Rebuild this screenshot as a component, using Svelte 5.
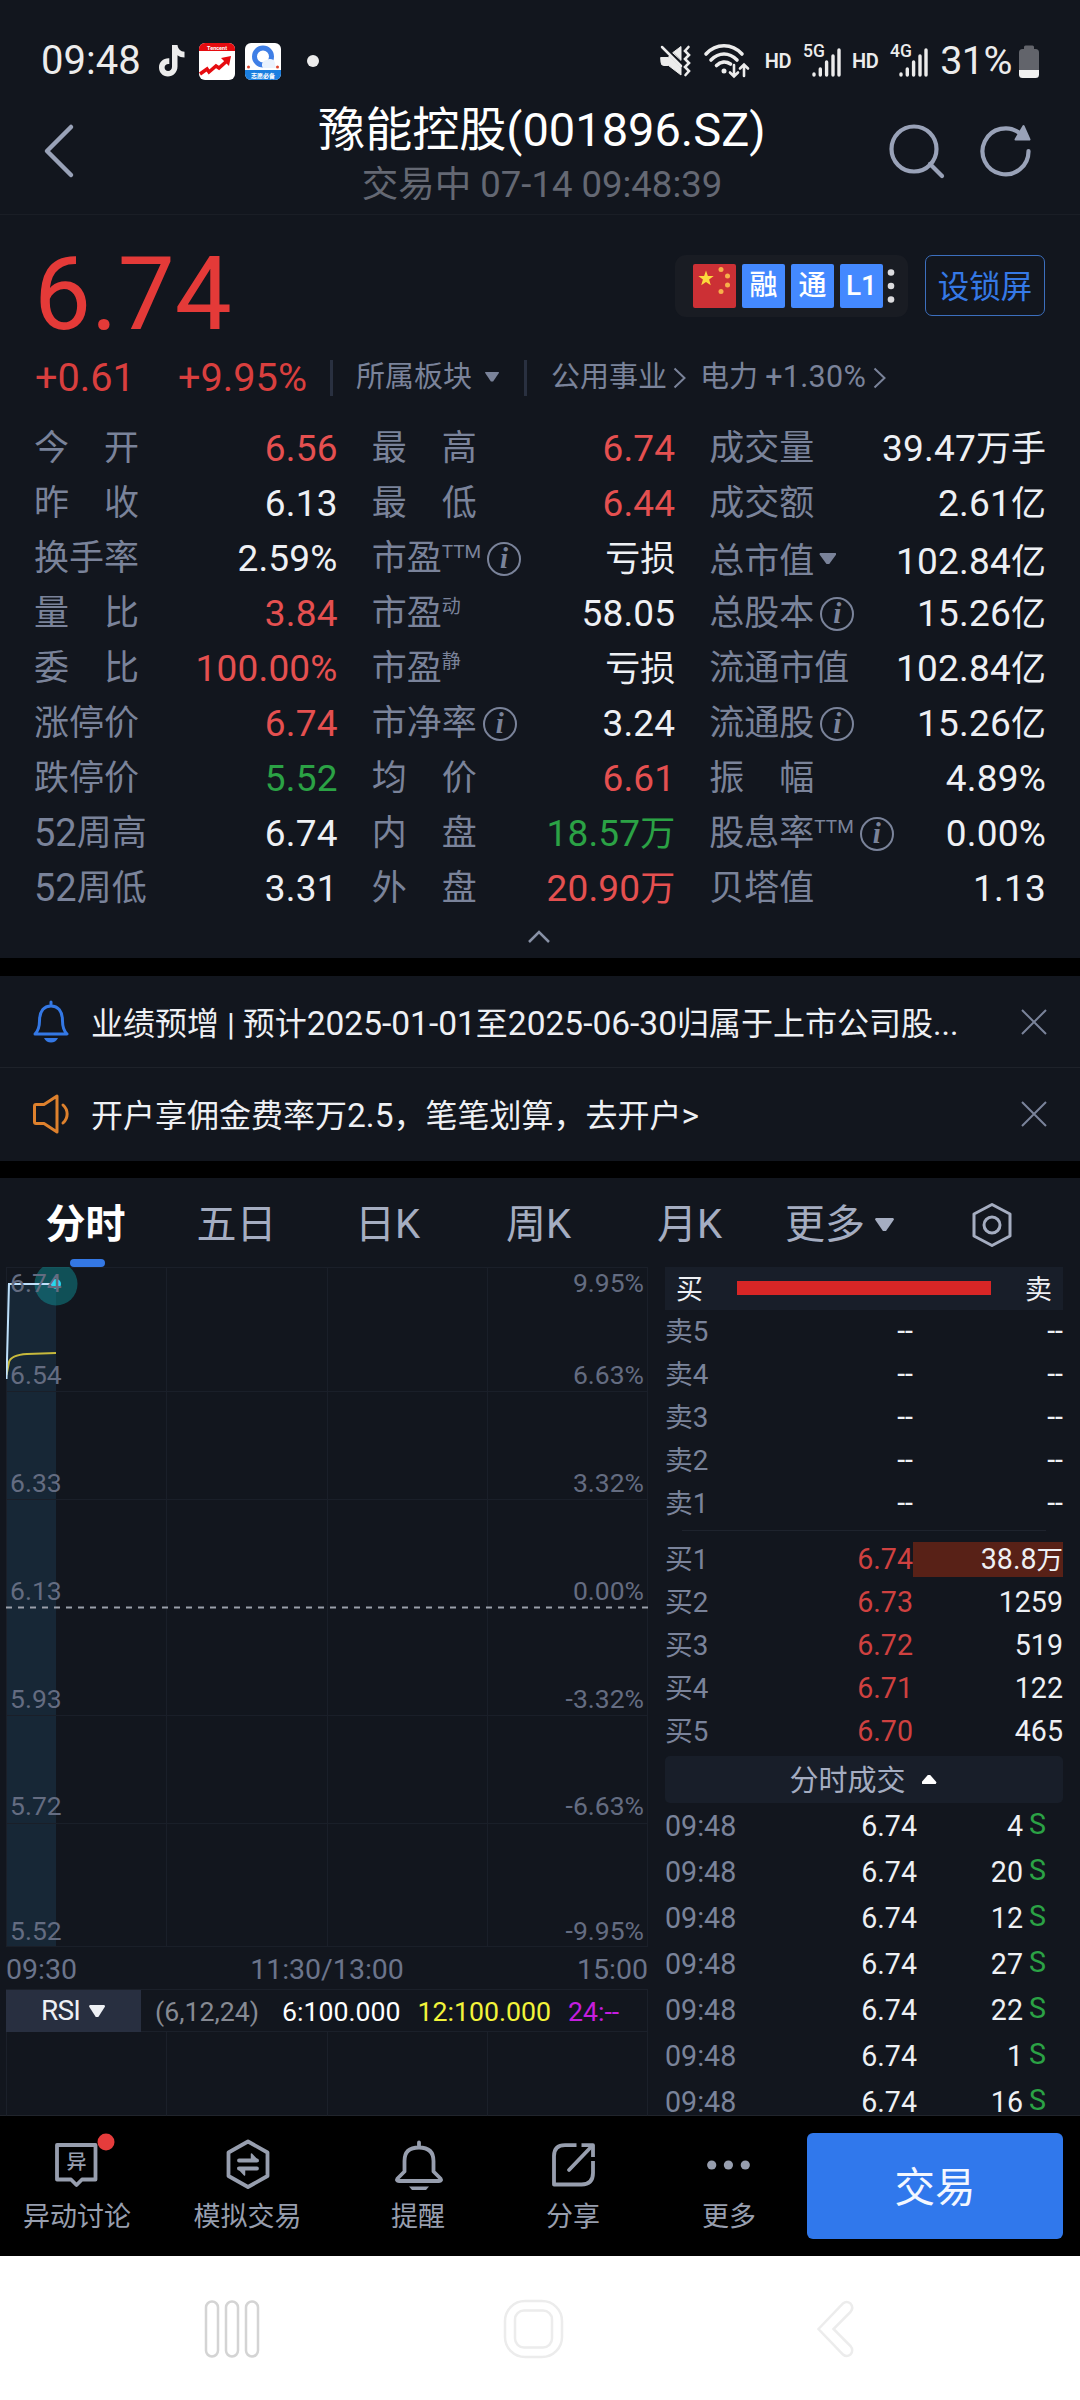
<script lang="ts">
  type Tone = 'up' | 'down' | '';

  interface Stat {
    prefix?: string;
    label: string;
    value: string;
    unit?: string;
    tone?: Tone;
    sup?: string;
    info?: boolean;
    menu?: boolean;
  }

  const statColumns: Stat[][] = [
    [
      { label: '今　开', value: '6.56', tone: 'up' },
      { label: '昨　收', value: '6.13' },
      { label: '换手率', value: '2.59%' },
      { label: '量　比', value: '3.84', tone: 'up' },
      { label: '委　比', value: '100.00%', tone: 'up' },
      { label: '涨停价', value: '6.74', tone: 'up' },
      { label: '跌停价', value: '5.52', tone: 'down' },
      { prefix: '52', label: '周高', value: '6.74' },
      { prefix: '52', label: '周低', value: '3.31' },
    ],
    [
      { label: '最　高', value: '6.74', tone: 'up' },
      { label: '最　低', value: '6.44', tone: 'up' },
      { label: '市盈', sup: 'TTM', info: true, value: '', unit: '亏损' },
      { label: '市盈', sup: '动', value: '58.05' },
      { label: '市盈', sup: '静', value: '', unit: '亏损' },
      { label: '市净率', info: true, value: '3.24' },
      { label: '均　价', value: '6.61', tone: 'up' },
      { label: '内　盘', value: '18.57', unit: '万', tone: 'down' },
      { label: '外　盘', value: '20.90', unit: '万', tone: 'up' },
    ],
    [
      { label: '成交量', value: '39.47', unit: '万手' },
      { label: '成交额', value: '2.61', unit: '亿' },
      { label: '总市值', menu: true, value: '102.84', unit: '亿' },
      { label: '总股本', info: true, value: '15.26', unit: '亿' },
      { label: '流通市值', value: '102.84', unit: '亿' },
      { label: '流通股', info: true, value: '15.26', unit: '亿' },
      { label: '振　幅', value: '4.89%' },
      { label: '股息率', sup: 'TTM', info: true, value: '0.00%' },
      { label: '贝塔值', value: '1.13' },
    ],
  ];

  const tabs = ['分时', '五日', '日K', '周K', '月K'];
  let activeTab = $state('分时');

  // y positions are relative to the top of the price pane
  const priceAxis = [
    { y: 16, price: '6.74', change: '9.95%' },
    { y: 108, price: '6.54', change: '6.63%' },
    { y: 216, price: '6.33', change: '3.32%' },
    { y: 324, price: '6.13', change: '0.00%' },
    { y: 432, price: '5.93', change: '-3.32%' },
    { y: 539, price: '5.72', change: '-6.63%' },
    { y: 664, price: '5.52', change: '-9.95%' },
  ];

  const asks = ['卖5', '卖4', '卖3', '卖2', '卖1'];
  const bids = [
    { label: '买1', price: '6.74', volume: '38.8', unit: '万', depth: 100 },
    { label: '买2', price: '6.73', volume: '1259', unit: '', depth: 0 },
    { label: '买3', price: '6.72', volume: '519', unit: '', depth: 0 },
    { label: '买4', price: '6.71', volume: '122', unit: '', depth: 0 },
    { label: '买5', price: '6.70', volume: '465', unit: '', depth: 0 },
  ];

  const trades = [4, 20, 12, 27, 22, 1, 16];
</script>

{#snippet closeIcon()}
  <svg class="close" width="28" height="28" viewBox="0 0 28 28">
    <path d="M2 2 26 26M26 2 2 26" />
  </svg>
{/snippet}

{#snippet signal(kind: string)}
  <span class="hd">HD</span>
  <svg class="signal" width="40" height="36" viewBox="0 0 40 36">
    <text x="0" y="14">{kind}</text>
    <path d="M11 31v1M17.3 26v6M23.6 19v13M30 13v19M36 7v25" />
  </svg>
{/snippet}

<div class="screen">
  <header>
    <div class="status">
      <span class="clock">09:48</span>
      <svg class="tiktok" width="28" height="34" viewBox="0 0 28 34">
        <path d="M14 1h5.5c.5 4 3 6.400 7 6.800v5.700c-2.700 0-5-.8-7-2.200v11.200c0 6-4.500 10-9.600 10C4.600 32.500 1 28.200 1 23.500c0-5.500 4.400-9.600 10.300-9.200v5.700c-2.500-.5-4.700 1-4.700 3.400 0 2 1.500 3.500 3.500 3.500 2.300 0 3.900-1.500 3.900-4.200z" />
      </svg>
      <svg class="app-icon" width="36" height="37" viewBox="0 0 36 37">
        <rect width="36" height="37" rx="6" fill="#fff" />
        <path d="M0 8V6a6 6 0 0 1 6-6h24a6 6 0 0 1 6 6v2z" fill="#e60c10" />
        <text x="18" y="6.500" text-anchor="middle" fill="#fff" font-size="5.500" font-weight="700">Tencent</text>
        <path d="m1 31 7-5 2 3 7-6 3 2 9-8" fill="none" stroke="#e60c10" stroke-width="3.500" />
        <path d="m22 15 10-2-2 10z" fill="#e60c10" />
      </svg>
      <svg class="app-icon" width="36" height="37" viewBox="0 0 36 37">
        <rect width="36" height="37" rx="6" fill="#fff" />
        <path d="M0 27h36v4a6 6 0 0 1-6 6H6a6 6 0 0 1-6-6z" fill="#1b7fe0" />
        <circle cx="18" cy="13.500" r="8.500" fill="none" stroke="#3f7fe6" stroke-width="5" />
        <path d="M17 23a5 5 0 0 1 5-6 5 5 0 0 1 8 3l1 5H18z" fill="#eaf2fd" />
        <circle cx="3.500" cy="24" r="1.500" fill="#e0452e" />
        <circle cx="32.500" cy="24" r="1.500" fill="#e0452e" />
        <text x="18" y="34.500" text-anchor="middle" fill="#fff" font-size="6" font-weight="700">志愿必备</text>
      </svg>
      <i class="more-dot"></i>
      <span class="spacer"></span>
      <svg class="mute" width="32" height="32" viewBox="0 0 32 32">
        <path d="M1 12.500h7l1.500-1.500L21 22.500V30L8.500 20.500H4a3 3 0 0 1-3-3zM13 7.500l8-6V15z" fill="#ececec" />
        <path d="m2 2 19 19" stroke-width="2.500" />
        <path d="m28.500 2-3.500 4 4 4-4 4 4 4-4 4 4 4-3.500 4" stroke-width="2.600" />
      </svg>
      <svg class="wifi" width="46" height="36" viewBox="0 0 46 36">
        <path d="M2 11C12 0 28 0 38 11M7 17c8-8 18-8 26 0M12.500 22.500c4-4 9.500-4.500 14-1.500" stroke-width="3.600" />
        <circle cx="20" cy="28" r="2.500" fill="#ececec" stroke="none" />
        <path d="M30 22v11M26 29.500l4 4 4-4M40 33V22M36 25.500l4-4 4 4" stroke-width="2.600" />
      </svg>
      {@render signal('5G')}
      {@render signal('4G')}
      <span class="battery-text">31%</span>
      <svg class="battery" width="20" height="33" viewBox="0 0 20 33">
        <path d="M5 4V2q0-1.500 1.500-1.500h7Q15 .5 15 2v2h1.500Q20 4 20 7.500V25H0V7.500Q0 4 3.500 4z" fill="#62646b" />
        <path d="M0 25h20v4.500q0 3.500-3.500 3.500h-13Q0 33 0 29.500z" fill="#f1f1f1" />
      </svg>
    </div>
    <div class="title-bar">
      <svg class="back" width="30" height="54" viewBox="0 0 30 54">
        <path d="M27 3 3 27l24 24" />
      </svg>
      <div class="title">
        <h1>豫能控股(001896.SZ)</h1>
        <p>交易中 07-14 09:48:39</p>
      </div>
      <svg class="tool" width="56" height="56" viewBox="0 0 56 56">
        <circle cx="25" cy="26" r="22.500" />
        <path d="m41 41 12 12" />
      </svg>
      <svg class="tool" width="52" height="56" viewBox="0 0 52 56">
        <path d="M40 10.500A23 23 0 1 0 48.500 28" />
        <path d="m43.500 3 6 13.500H35.500z" class="solid" />
      </svg>
    </div>
  </header>

  <section class="quote">
    <div class="price-row">
      <strong class="price">6.74</strong>
      <div class="badges">
        <svg width="43" height="44" viewBox="0 0 43 44">
          <rect width="43" height="44" rx="2" fill="#cc3035" />
          <path d="m13 6.500 1.900 5.500 5.800.1-4.600 3.500 1.700 5.600-4.800-3.300-4.800 3.300 1.700-5.600-4.600-3.500 5.800-.1z" fill="#fcd93c" />
          <g fill="#f7b04a">
            <circle cx="28" cy="5.500" r="2.500" /><circle cx="34.500" cy="12" r="2.500" />
            <circle cx="34.500" cy="21" r="2.500" /><circle cx="28" cy="27.500" r="2.500" />
          </g>
        </svg>
        <span>融</span><span>通</span><span>L1</span>
        <svg width="8" height="44" viewBox="0 0 8 44" fill="#dcdcdf">
          <circle cx="4" cy="8.500" r="3.300" /><circle cx="4" cy="22" r="3.300" /><circle cx="4" cy="35.500" r="3.300" />
        </svg>
      </div>
      <button class="lock">设锁屏</button>
    </div>
    <div class="change-row">
      <span class="diff">+0.61</span>
      <span class="diff pct">+9.95%</span>
      <div class="sector">所属板块 <i class="tri"></i></div>
      <div class="industry">
        <span>公用事业</span>
        <svg width="13" height="22" viewBox="0 0 13 22"><path d="m1.500 1.500 10 9.500-10 9.500" /></svg>
        <span class="power">电力 <b>+1.30%</b></span>
        <svg width="13" height="22" viewBox="0 0 13 22"><path d="m1.500 1.500 10 9.500-10 9.500" /></svg>
      </div>
    </div>
    <div class="stats">
      {#each statColumns as column}
        <dl>
          {#each column as stat}
            <div class="stat" class:lowered={stat.menu}>
              <dt>
                {#if stat.prefix}<span>{stat.prefix}</span>{/if}{stat.label}{#if stat.sup}<sup>{stat.sup}</sup>{/if}
                {#if stat.info}<i class="info">i</i>{/if}
                {#if stat.menu}<i class="tri menu"></i>{/if}
              </dt>
              <dd class={stat.tone}>{stat.value}{#if stat.unit}<span>{stat.unit}</span>{/if}</dd>
            </div>
          {/each}
        </dl>
      {/each}
    </div>
    <svg class="collapse" width="24" height="15" viewBox="0 0 24 15"><path d="M2 13 12 3l10 10" /></svg>
  </section>

  <section class="notices">
    <div class="notice">
      <svg class="bell" width="38" height="42" viewBox="0 0 38 42">
        <path d="M19 1v4M3 33c3-3 4.500-6 4.500-13C7.500 10 12 5 19 5s11.500 5 11.500 15c0 7 1.500 10 4.500 13z" />
        <path d="M12 37h14c-1.500 3-4 4.500-7 4.500S13.500 40 12 37z" fill="#3478e5" stroke="none" />
      </svg>
      <p>业绩预增 | 预计<b>2025-01-01</b>至<b>2025-06-30</b>归属于上市公司股...</p>
      {@render closeIcon()}
    </div>
    <div class="notice">
      <svg class="speaker" width="38" height="42" viewBox="0 0 38 42">
        <path d="M25 3v36L12 30.500H4q-1.500 0-1.500-1.500V13q0-1.500 1.500-1.500h8zM31 12c5.500 5 5.500 13 0 18" />
      </svg>
      <p>开户享佣金费率万<b>2.5</b>，笔笔划算，去开户<b>&gt;</b></p>
      {@render closeIcon()}
    </div>
  </section>

  <section class="market">
    <nav class="tabs">
      {#each tabs as tab}
        <button class:active={activeTab === tab} onclick={() => (activeTab = tab)}>{tab}</button>
      {/each}
      <button class="more">更多<i class="tri"></i></button>
      <svg width="42" height="46" viewBox="0 0 42 46">
        <path d="m21 2.500 18 9.500v22l-18 9.500L3 34V12z" />
        <circle cx="21" cy="23" r="8" />
      </svg>
    </nav>

    <div class="panes">
      <div class="chart">
        <div class="plot">
          <svg width="642" height="680" viewBox="0 0 642 680">
            <rect x="0" y="17" width="50" height="663" fill="#172736" />
            <path class="grid" d="M0 .5h642M0 124.500h642M0 232.500h642M0 448.500h642M0 556.500h642M0 679.500h642M.5 0v680M160.500 0v680M321.500 0v680M481.500 0v680M641.500 0v680" />
            <path d="M0 340.500h642" stroke="#9a9faa" stroke-width="2" stroke-dasharray="6 6" />
            <circle cx="50" cy="17" r="21.500" fill="#0fa3a8" fill-opacity=".42" />
            <path d="M.5 108 3 95q2-7 18-8l29-1" fill="none" stroke="#c7b93c" stroke-width="2" />
            <path d="M.5 112 3 17h47" fill="none" stroke="#bfe0fb" stroke-width="2" />
            <circle cx="50" cy="17" r="5" fill="#27d6ee" />
          </svg>
          {#each priceAxis as tick}
            <div class="tick" style="top: {tick.y}px">
              <span>{tick.price}</span><span>{tick.change}</span>
            </div>
          {/each}
        </div>
        <div class="times"><span>09:30</span><span>11:30/13:00</span><span>15:00</span></div>
        <div class="indicator">
          <button>RSI<i class="tri"></i></button>
          <span class="params">(6,12,24)</span>
          <span class="r6">6:100.000</span>
          <span class="r12">12:100.000</span>
          <span class="r24">24:--</span>
        </div>
        <div class="subpane"><i></i><i></i><i></i><i></i></div>
      </div>

      <div class="book">
        <div class="ratio"><span>买</span><i></i><span>卖</span></div>
        <div class="asks">
          {#each asks as label}
            <div class="level"><span>{label}</span><b>--</b><b>--</b></div>
          {/each}
        </div>
        <div class="bids">
          {#each bids as bid}
            <div class="level">
              <span>{bid.label}</span>
              <b class="red">{bid.price}</b>
              <b class="volume"><i style="width: {bid.depth}%"></i><em>{bid.volume}{#if bid.unit}<small>{bid.unit}</small>{/if}</em></b>
            </div>
          {/each}
        </div>
        <div class="trades-head">分时成交<i></i></div>
        {#each trades as volume}
          <div class="trade"><span>09:48</span><b>6.74</b><b>{volume}</b><em>S</em></div>
        {/each}
      </div>
    </div>
  </section>

  <footer>
    <div class="action">
      <svg width="60" height="56" viewBox="0 0 60 56">
        <path d="M10 12h38.500v34.500H35l-5.500 5.500-5.500-5.500H10z" />
        <text x="29.500" y="36" text-anchor="middle">异</text>
        <circle cx="59" cy="9" r="8.500" fill="#e53c3c" />
      </svg>
      异动讨论
    </div>
    <div class="action">
      <svg width="60" height="56" viewBox="0 0 60 56">
        <path d="m30 8.500 19.500 11v23.500L30 54 10.500 43V19.500z" />
        <path d="M21 27.500h18M39 35.500H21" />
        <path d="M33.500 21v7h6.500zM26.500 42v-7H20z" class="head" />
      </svg>
      模拟交易
    </div>
    <div class="action">
      <svg width="60" height="56" viewBox="0 0 60 56">
        <path d="M31 9.500v3M16.500 38.500V28Q16.500 14.500 31 14.500T45.500 28v10.500l7 7q1.500 2.500-1.500 2.500H11q-3 0-1.500-2.500z" />
        <path d="M21 53.500h20l-3 3.500H24z" class="dots" />
      </svg>
      提醒
    </div>
    <div class="action">
      <svg width="60" height="56" viewBox="0 0 60 56">
        <path d="M33.500 12.200H22Q11 12.200 11 23v28.500h27.500q11.500 0 11.500-11.500V28M38.500 12.200H50V24" class="butt" />
        <path d="M26 37 49 13" />
      </svg>
      分享
    </div>
    <div class="action">
      <svg width="60" height="56" viewBox="0 0 60 56">
        <g class="dots"><circle cx="12.700" cy="32" r="4.600" /><circle cx="29.400" cy="32" r="4.600" /><circle cx="46.300" cy="32" r="4.600" /></g>
      </svg>
      更多
    </div>
    <button class="trade-button">交易</button>
  </footer>

  <div class="navbar">
    <svg width="56" height="60" viewBox="0 0 56 60" stroke="#d4d4d4">
      <rect x="2" y="2.500" width="12" height="55" rx="6" /><rect x="22" y="2.500" width="12" height="55" rx="6" /><rect x="42" y="2.500" width="12" height="55" rx="6" />
    </svg>
    <svg class="home" width="60" height="60" viewBox="0 0 60 60" stroke="#ececec">
      <rect x="2" y="2" width="57" height="56" rx="20" /><rect x="12" y="11.500" width="37" height="37" rx="9" />
    </svg>
    <svg class="nav-back" width="40" height="60" viewBox="0 0 40 60" stroke="#ececec">
      <path d="M2.500 30 27 4.500q3.500-3 7.500 0 3.500 4 0 8.500L17.500 30l17 17q3.500 4.500 0 8.500-4 3-7.500 0z" />
    </svg>
  </div>
</div>

<style>
  :global(body) {
    background: #fff;
  }

  .screen {
    width: 1080px;
    height: 2400px;
    overflow: hidden;
    background: #12161e;
    color: #eef0f4;
    font-family: Roboto, 'Noto Sans CJK SC', sans-serif;
    display: flex;
    flex-direction: column;
  }

  .screen * {
    box-sizing: border-box;
  }

  svg {
    display: block;
    flex: none;
    overflow: visible;
  }

  i,
  em {
    font-style: normal;
  }

  b {
    font-weight: 400;
  }

  button {
    border: 0;
    padding: 0;
    background: none;
    color: inherit;
    font: inherit;
  }

  h1,
  p,
  dl,
  dd {
    margin: 0;
    font-weight: 400;
  }

  .tri {
    display: inline-block;
    flex: none;
    width: 14px;
    height: 10px;
    background: currentColor;
    clip-path: polygon(4% 0, 96% 0, 100% 12%, 58% 100%, 42% 100%, 0 12%);
  }

  header {
    height: 215px;
    border-bottom: 1px solid #1a1e26;
  }

  .status {
    display: flex;
    align-items: center;
    height: 82px;
    padding: 40px 41px 0 41px;
    color: #ececec;
  }

  .clock {
    width: 117px;
    margin-top: -2px;
    font-size: 40px;
  }

  .tiktok {
    fill: #ececec;
  }

  .app-icon {
    margin-left: 10px;
  }

  .tiktok + .app-icon {
    margin-left: 13px;
  }

  .more-dot {
    width: 12px;
    height: 12px;
    margin-left: 26px;
    border-radius: 50%;
    background: #ececec;
  }

  .spacer {
    flex: 1;
  }

  .mute,
  .wifi {
    fill: none;
    stroke: #ececec;
    stroke-linecap: round;
    margin-right: 12px;
  }

  .wifi {
    margin-right: 15px;
  }

  .hd {
    font-size: 20px;
    font-weight: 600;
    letter-spacing: -0.5px;
  }

  .signal {
    margin: 0 9px 0 12px;
    fill: none;
    stroke: #ececec;
    stroke-width: 3.4;
    stroke-linecap: round;
  }

  .signal text {
    fill: #ececec;
    stroke: none;
    font-size: 17.5px;
    font-weight: 500;
  }

  .battery-text {
    margin: -2px 7px 0 1px;
    font-size: 39.5px;
    letter-spacing: -0.5px;
  }

  .title-bar {
    display: flex;
    align-items: center;
    height: 132px;
    padding: 6px 48px 0 44px;
  }

  .back {
    fill: none;
    stroke: #99a2b8;
    stroke-width: 4.5;
    stroke-linecap: round;
    stroke-linejoin: round;
  }

  .title {
    flex: 1;
    margin: 8px 0 0 121px;
    text-align: center;
  }

  h1 {
    font-size: 47px;
    line-height: 59px;
    color: #fff;
    white-space: nowrap;
  }

  .title p {
    font-size: 36.5px;
    line-height: 51px;
    color: #646873;
  }

  .tool {
    fill: none;
    stroke: #99a2b8;
    stroke-width: 4.2;
    stroke-linecap: round;
    margin-right: 35px;
  }

  .tool + .tool {
    margin-right: 0;
  }

  .tool .solid {
    fill: #99a2b8;
    stroke-width: 2;
    stroke-linejoin: round;
  }

  .quote {
    display: flex;
    flex-direction: column;
    height: 743px;
    padding: 0 34px;
  }

  .price-row {
    display: flex;
    align-items: flex-start;
    height: 135px;
    padding: 40px 1px 0;
  }

  .price {
    flex: 1;
    margin: -10px 0 0 -1px;
    color: #e43a38;
    font-size: 101.5px;
    font-weight: 400;
    line-height: 100px;
  }

  .badges {
    display: flex;
    align-items: center;
    gap: 6px;
    width: 233px;
    height: 62px;
    margin-right: 17px;
    padding-left: 18px;
    border-radius: 11px;
    background: #191c23;
  }

  .badges span {
    width: 43px;
    height: 44px;
    border-radius: 2px;
    background: #4489ff;
    color: #fff;
    font-size: 28px;
    font-weight: 500;
    line-height: 43px;
    text-align: center;
  }

  .badges span:nth-of-type(3) {
    margin-right: -2px;
  }

  .lock {
    width: 120px;
    height: 61px;
    padding-bottom: 3px;
    border: 1.5px solid #3c6fbe;
    border-radius: 7px;
    color: #3579e6;
    font-size: 31.5px;
  }

  .change-row {
    display: flex;
    align-items: center;
    height: 54px;
    padding: 1px 0 0 1px;
    color: #7a839a;
    font-size: 29px;
    line-height: 40px;
  }

  .diff {
    width: 143px;
    color: #d93f3e;
    font-size: 39.7px;
  }

  .diff.pct {
    width: 152px;
  }

  .sector {
    display: flex;
    align-items: center;
    width: 197px;
    height: 36px;
    gap: 13px;
    padding: 0 0 2px 23px;
    border: solid #293040;
    border-width: 0 3px;
  }

  .industry {
    display: flex;
    align-items: center;
    margin: -2px 0 0 24px;
    white-space: nowrap;
  }

  .industry svg {
    margin: 2px 0 0 6px;
    fill: none;
    stroke: #7a839a;
    stroke-width: 2;
  }

  .power {
    margin-left: 14px;
  }

  .power b {
    font-size: 30.5px;
    letter-spacing: 0.3px;
  }

  .power + svg {
    margin-left: 7px;
  }

  .stats {
    display: flex;
    gap: 34px;
    margin-top: 17px;
  }

  dl {
    width: 304px;
  }

  dl:last-child {
    width: 337px;
  }

  .stat {
    display: flex;
    justify-content: space-between;
    height: 55px;
    line-height: 55px;
    white-space: nowrap;
  }

  .lowered {
    padding-top: 3px;
  }

  dt {
    display: flex;
    align-items: center;
    height: 55px;
    color: #7a839a;
    font-size: 35px;
  }

  dt span {
    font-size: 38px;
  }

  sup {
    align-self: flex-start;
    margin-top: 7px;
    font-size: 19px;
    line-height: 28px;
  }

  .info {
    width: 34px;
    height: 34px;
    margin-left: 6px;
    border: 2px solid currentColor;
    border-radius: 50%;
    font: italic 700 29px/28px 'Liberation Serif', serif;
    text-align: center;
  }

  .tri.menu {
    width: 17px;
    height: 11px;
    margin: -6px 0 0 5px;
  }

  dd {
    font-size: 37px;
    letter-spacing: 0.2px;
  }

  dd span {
    font-size: 35px;
    letter-spacing: 0;
  }

  .up {
    color: #e55050;
  }

  .down {
    color: #2ba245;
  }

  .collapse {
    align-self: center;
    margin: 13px 2px 0 0;
    fill: none;
    stroke: #8891a6;
    stroke-width: 2.5;
  }

  .notices {
    height: 220px;
    border: solid #000;
    border-width: 18px 0 17px;
  }

  .notice {
    display: flex;
    align-items: center;
    height: 92px;
    padding: 0 32px;
    border-bottom: 1px solid #1e222a;
  }

  .notice + .notice {
    border: 0;
  }

  .notice p {
    flex: 1;
    margin: 4px 0 0 21px;
    font-size: 32px;
    line-height: 44px;
    white-space: nowrap;
  }

  .notice b {
    font-size: 33.5px;
  }

  .bell,
  .speaker {
    fill: none;
    stroke: #3478e5;
    stroke-width: 3;
    stroke-linejoin: round;
    stroke-linecap: round;
  }

  .speaker {
    stroke: #de812d;
  }

  .close {
    fill: none;
    stroke: #7a839a;
    stroke-width: 2;
  }

  .market {
    height: 938px;
    border-bottom: 1px solid #20242c;
  }

  .tabs {
    display: flex;
    align-items: center;
    height: 89px;
    padding-left: 10px;
    color: #a5adc1;
    font-size: 40px;
  }

  .tabs button {
    position: relative;
    width: 151px;
    height: 89px;
    padding-top: 4px;
    line-height: 85px;
  }

  .tabs .active {
    color: #fff;
    font-weight: 700;
  }

  .tabs .active::after {
    content: '';
    position: absolute;
    left: 60px;
    bottom: 0;
    width: 35px;
    height: 8px;
    border-radius: 4px;
    background: #3478e5;
  }

  .tabs .more {
    display: flex;
    align-items: center;
    width: 110px;
    margin-left: 20px;
    white-space: nowrap;
  }

  .more .tri {
    width: 19px;
    height: 13px;
    margin-left: 10px;
  }

  .tabs svg {
    margin: 4px 0 0 76px;
    fill: none;
    stroke: #a5adc1;
    stroke-width: 3;
    stroke-linejoin: round;
  }

  .panes {
    display: flex;
  }

  .chart {
    width: 642px;
    margin-left: 6px;
  }

  .plot {
    position: relative;
    height: 681px;
    overflow: hidden;
  }

  .grid {
    stroke: #1a1f29;
    stroke-width: 1;
  }

  .tick {
    position: absolute;
    left: 4px;
    right: 4px;
    display: flex;
    justify-content: space-between;
    color: #646c81;
    font-size: 26.5px;
    line-height: 30px;
    transform: translateY(-50%);
  }

  .times {
    display: flex;
    justify-content: space-between;
    height: 41px;
    color: #6b748b;
    font-size: 28.5px;
    line-height: 43px;
  }

  .indicator {
    display: flex;
    align-items: center;
    height: 43px;
    border: 1px solid #1b202a;
    border-left: 0;
    font-size: 26.7px;
    line-height: 40px;
    white-space: nowrap;
  }

  .indicator span {
    padding-top: 2px;
  }

  .indicator button {
    display: flex;
    align-items: center;
    justify-content: center;
    gap: 9px;
    width: 135px;
    height: 42px;
    padding: 1px 1px 0 0;
    background: #282f40;
    font-size: 28px;
    letter-spacing: -0.8px;
  }

  .indicator .tri {
    width: 16px;
    height: 12px;
  }

  .params {
    margin-left: 14px;
    color: #868a93;
  }

  .r6 {
    margin-left: 23px;
    color: #fff;
  }

  .r12 {
    margin-left: 17px;
    color: #f2f43a;
  }

  .r24 {
    margin-left: 17px;
    color: #c41edf;
  }

  .subpane {
    display: grid;
    grid-template-columns: repeat(4, 1fr);
    height: 84px;
    border-left: 1px solid #1b202a;
  }

  .subpane i {
    border-right: 1px solid #1b202a;
  }

  .book {
    width: 398px;
    margin-left: 17px;
    font-size: 28.6px;
  }

  .ratio {
    display: flex;
    align-items: center;
    justify-content: space-between;
    height: 43px;
    padding: 0 11px 2px;
    background: #181e29;
    font-size: 27px;
  }

  .ratio i {
    width: 254px;
    height: 14px;
    margin-top: 1px;
    background: #d82626;
  }

  .asks {
    position: relative;
    height: 221px;
  }

  .asks::after {
    content: '';
    position: absolute;
    left: 17px;
    right: 17px;
    bottom: 0;
    height: 1px;
    background: #1e232d;
  }

  .bids {
    height: 225px;
    padding-top: 7px;
  }

  .level {
    display: grid;
    grid-template-columns: 98px 150px 150px;
    height: 43px;
    line-height: 43px;
    text-align: right;
  }

  .level > span {
    color: #7a839a;
    font-size: 27.8px;
    text-align: left;
  }

  .red {
    color: #cf4140;
  }

  .volume {
    position: relative;
  }

  .volume i {
    position: absolute;
    top: 4px;
    right: 0;
    height: 35px;
    background: #582117;
  }

  .volume em {
    position: relative;
  }

  .volume small {
    font-size: 26.5px;
  }

  .trades-head {
    display: flex;
    align-items: center;
    justify-content: center;
    gap: 16px;
    height: 47px;
    padding: 2px 2px 0 0;
    border-radius: 5px;
    background: #181e29;
    color: #a5adc1;
    font-size: 29px;
    line-height: 44px;
  }

  .trades-head i {
    width: 15px;
    height: 9px;
    margin-top: -2px;
    background: #fff;
    clip-path: polygon(42% 0, 58% 0, 100% 80%, 95% 100%, 5% 100%, 0 80%);
  }

  .trade {
    display: grid;
    grid-template-columns: 100px 152px 106px 30px;
    height: 46px;
    padding-top: 10px;
    line-height: 26px;
    text-align: right;
  }

  .trade:last-child {
    height: 36px;
  }

  .trade span {
    color: #7a839a;
    text-align: left;
  }

  .trade em {
    margin-top: -2px;
    padding-left: 6px;
    color: #2ba245;
    font-size: 28.6px;
    text-align: left;
  }

  footer {
    display: grid;
    grid-template-columns: 154px 187px 154px 156px 156px 256px;
    height: 140px;
    background: #000;
  }

  .action {
    display: flex;
    flex-direction: column;
    align-items: center;
    padding-top: 17px;
    color: #979eae;
    font-size: 27px;
    line-height: 56px;
  }

  .action svg {
    fill: none;
    stroke: #979eae;
    stroke-width: 3.8;
    stroke-linejoin: round;
    stroke-linecap: round;
  }

  .action text {
    fill: #979eae;
    stroke: none;
    font-size: 20px;
    font-weight: 500;
  }

  .action circle {
    stroke: none;
  }

  .action .head {
    fill: #979eae;
    stroke-width: 1.5;
  }

  .action .dots {
    fill: #979eae;
    stroke: none;
  }

  .action .butt {
    stroke-linecap: butt;
  }

  .trade-button {
    height: 106px;
    margin-top: 17px;
    padding-top: 4px;
    border-radius: 6px;
    background: #3078ec;
    color: #f3f7ff;
    font-size: 40.5px;
    line-height: 102px;
  }

  .navbar {
    display: flex;
    height: 144px;
    padding: 43px 0 0 204px;
    background: #fff;
  }

  .navbar svg {
    fill: none;
    stroke-width: 2.5;
  }

  .home {
    margin-left: 243px;
  }

  .nav-back {
    margin-left: 253px;
  }
</style>
